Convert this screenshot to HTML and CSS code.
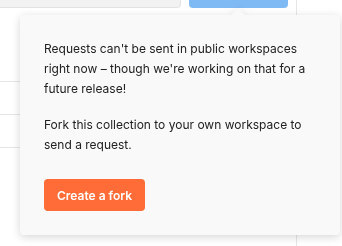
FILE: index.html
```html
<!DOCTYPE html>
<html lang="en">
<head>
  <meta charset="UTF-8">
  <title>Fork popover</title>
  <link rel="stylesheet" href="styles.css">
</head>
<body>

  <div class="layout">
    <div class="pane">
      <div class="toolbar">
        <div class="url-input"></div>
        <div class="send-btn"></div>
      </div>
      <div class="rows">
        <div class="row"></div>
        <div class="row"></div>
        <div class="row"></div>
      </div>
    </div>
    <div class="side"></div>
  </div>

  <div class="popover">
    <p>Requests can't be sent in public workspaces right now – though we're working on that for a future release!</p>
    <p>Fork this collection to your own workspace to send a request.</p>
    <button class="fork-btn">Create a fork</button>
  </div>

</body>
</html>
```

FILE: styles.css
```css
body {
  margin: 0;
  font-family: Inter, "Noto Sans", sans-serif;
  background: white;
  width: 342px;
  height: 246px;
  overflow: hidden;
  position: relative;
}
.layout {
  display: flex;
  height: 246px;
}
.pane {
  width: 296px;
  border-right: 1px solid #e6e6e6;
}
.toolbar {
  display: flex;
  gap: 8px;
  padding-right: 8px;
  height: 8px;
}
.url-input {
  width: 180px;
  background: #f2f2f2;
  border: 1px solid #e3e3e3;
  border-top: none;
  border-left: none;
  border-radius: 0 0 4px 0;
}
.send-btn {
  flex: 1;
  background: #80baf4;
  border-radius: 0 0 4px 4px;
}
.rows {
  margin-top: 73px;
}
.row {
  height: 32px;
  border-top: 1px solid #e6e6e6;
}
.side {
  flex: 1;
}
.popover {
  position: absolute;
  left: 20px;
  top: 15px;
  width: 320px;
  box-sizing: border-box;
  padding: 24px;
  background: #f9f9f9;
  border-radius: 4px;
  filter: drop-shadow(0 2px 4px rgba(0, 0, 0, 0.16));
}
.popover::before {
  content: "";
  position: absolute;
  top: -7px;
  left: 211px;
  border-left: 7px solid transparent;
  border-right: 7px solid transparent;
  border-bottom: 7px solid #f9f9f9;
}
.popover p {
  margin: 0 0 16px;
  font-size: 12px;
  line-height: 20px;
  color: #212121;
}
.fork-btn {
  margin-top: 8px;
  height: 32px;
  padding: 0 13px;
  background: #ff6c37;
  color: white;
  border: none;
  border-radius: 4px;
  font-family: inherit;
  font-size: 12px;
  font-weight: 600;
  cursor: pointer;
}
```
